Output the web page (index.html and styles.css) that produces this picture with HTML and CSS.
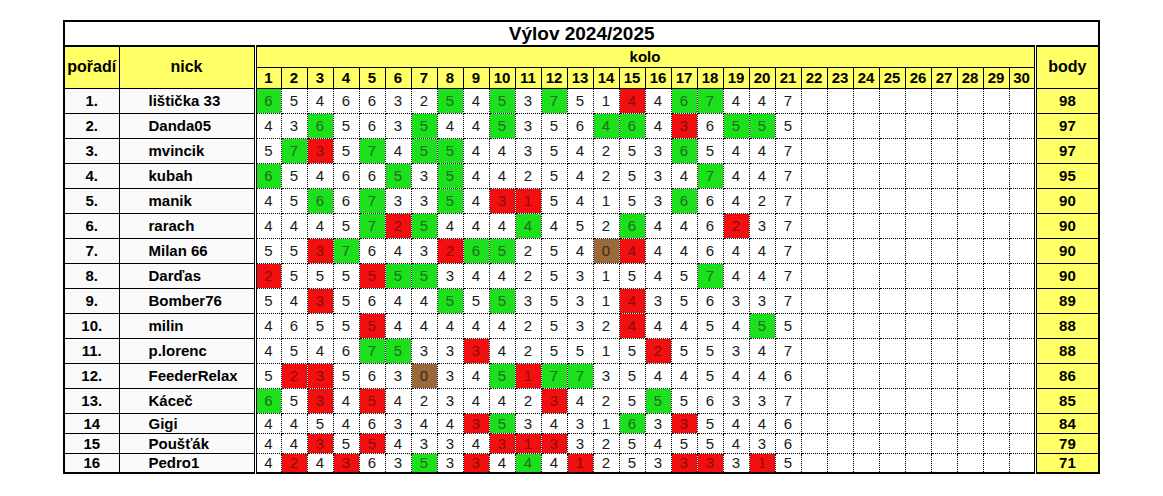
FILE: index.html
```html
<!DOCTYPE html>
<html lang="cs">
<head>
<meta charset="utf-8">
<title>Výlov 2024/2025</title>
<link rel="stylesheet" href="styles.css">
</head>
<body>
<table class="sheet">
<colgroup>
<col class="c-rank"><col class="c-nick">
<col class="c-k"><col class="c-k"><col class="c-k"><col class="c-k"><col class="c-k"><col class="c-k"><col class="c-k"><col class="c-k"><col class="c-k"><col class="c-k">
<col class="c-k"><col class="c-k"><col class="c-k"><col class="c-k"><col class="c-k"><col class="c-k"><col class="c-k"><col class="c-k"><col class="c-k"><col class="c-k">
<col class="c-k"><col class="c-k"><col class="c-k"><col class="c-k"><col class="c-k"><col class="c-k"><col class="c-k"><col class="c-k"><col class="c-k"><col class="c-k">
<col class="c-body">
</colgroup>
<thead>
<tr class="r-title"><th colspan="33" class="title">Výlov 2024/2025</th></tr>
<tr class="r-kolo"><th rowspan="2" class="hdr rank-h">pořadí</th><th rowspan="2" class="hdr nick-h">nick</th><th colspan="30" class="hdr kolo">kolo</th><th rowspan="2" class="hdr body-h">body</th></tr>
<tr class="r-num"><th class="hdr num">1</th><th class="hdr num">2</th><th class="hdr num">3</th><th class="hdr num">4</th><th class="hdr num">5</th><th class="hdr num">6</th><th class="hdr num">7</th><th class="hdr num">8</th><th class="hdr num">9</th><th class="hdr num">10</th><th class="hdr num">11</th><th class="hdr num">12</th><th class="hdr num">13</th><th class="hdr num">14</th><th class="hdr num">15</th><th class="hdr num">16</th><th class="hdr num">17</th><th class="hdr num">18</th><th class="hdr num">19</th><th class="hdr num">20</th><th class="hdr num">21</th><th class="hdr num">22</th><th class="hdr num">23</th><th class="hdr num">24</th><th class="hdr num">25</th><th class="hdr num">26</th><th class="hdr num">27</th><th class="hdr num">28</th><th class="hdr num">29</th><th class="hdr num">30</th></tr>
</thead>
<tbody>
<tr class="row"><td class="rank">1.</td><td class="nick">lištička 33</td><td class="v g">6</td><td class="v">5</td><td class="v">4</td><td class="v">6</td><td class="v">6</td><td class="v">3</td><td class="v">2</td><td class="v g">5</td><td class="v">4</td><td class="v g">5</td><td class="v">3</td><td class="v g">7</td><td class="v">5</td><td class="v">1</td><td class="v r">4</td><td class="v">4</td><td class="v g">6</td><td class="v g">7</td><td class="v">4</td><td class="v">4</td><td class="v">7</td><td class="v"></td><td class="v"></td><td class="v"></td><td class="v"></td><td class="v"></td><td class="v"></td><td class="v"></td><td class="v"></td><td class="v"></td><td class="pts">98</td></tr>
<tr class="row"><td class="rank">2.</td><td class="nick">Danda05</td><td class="v">4</td><td class="v">3</td><td class="v g">6</td><td class="v">5</td><td class="v">6</td><td class="v">3</td><td class="v g">5</td><td class="v">4</td><td class="v">4</td><td class="v g">5</td><td class="v">3</td><td class="v">5</td><td class="v">6</td><td class="v g">4</td><td class="v g">6</td><td class="v">4</td><td class="v r">3</td><td class="v">6</td><td class="v g">5</td><td class="v g">5</td><td class="v">5</td><td class="v"></td><td class="v"></td><td class="v"></td><td class="v"></td><td class="v"></td><td class="v"></td><td class="v"></td><td class="v"></td><td class="v"></td><td class="pts">97</td></tr>
<tr class="row"><td class="rank">3.</td><td class="nick">mvincik</td><td class="v">5</td><td class="v g">7</td><td class="v r">3</td><td class="v">5</td><td class="v g">7</td><td class="v">4</td><td class="v g">5</td><td class="v g">5</td><td class="v">4</td><td class="v">4</td><td class="v">3</td><td class="v">5</td><td class="v">4</td><td class="v">2</td><td class="v">5</td><td class="v">3</td><td class="v g">6</td><td class="v">5</td><td class="v">4</td><td class="v">4</td><td class="v">7</td><td class="v"></td><td class="v"></td><td class="v"></td><td class="v"></td><td class="v"></td><td class="v"></td><td class="v"></td><td class="v"></td><td class="v"></td><td class="pts">97</td></tr>
<tr class="row"><td class="rank">4.</td><td class="nick">kubah</td><td class="v g">6</td><td class="v">5</td><td class="v">4</td><td class="v">6</td><td class="v">6</td><td class="v g">5</td><td class="v">3</td><td class="v g">5</td><td class="v">4</td><td class="v">4</td><td class="v">2</td><td class="v">5</td><td class="v">4</td><td class="v">2</td><td class="v">5</td><td class="v">3</td><td class="v">4</td><td class="v g">7</td><td class="v">4</td><td class="v">4</td><td class="v">7</td><td class="v"></td><td class="v"></td><td class="v"></td><td class="v"></td><td class="v"></td><td class="v"></td><td class="v"></td><td class="v"></td><td class="v"></td><td class="pts">95</td></tr>
<tr class="row"><td class="rank">5.</td><td class="nick">manik</td><td class="v">4</td><td class="v">5</td><td class="v g">6</td><td class="v">6</td><td class="v g">7</td><td class="v">3</td><td class="v">3</td><td class="v g">5</td><td class="v">4</td><td class="v r">3</td><td class="v r">1</td><td class="v">5</td><td class="v">4</td><td class="v">1</td><td class="v">5</td><td class="v">3</td><td class="v g">6</td><td class="v">6</td><td class="v">4</td><td class="v">2</td><td class="v">7</td><td class="v"></td><td class="v"></td><td class="v"></td><td class="v"></td><td class="v"></td><td class="v"></td><td class="v"></td><td class="v"></td><td class="v"></td><td class="pts">90</td></tr>
<tr class="row"><td class="rank">6.</td><td class="nick">rarach</td><td class="v">4</td><td class="v">4</td><td class="v">4</td><td class="v">5</td><td class="v g">7</td><td class="v r">2</td><td class="v g">5</td><td class="v">4</td><td class="v">4</td><td class="v">4</td><td class="v g">4</td><td class="v">4</td><td class="v">5</td><td class="v">2</td><td class="v g">6</td><td class="v">4</td><td class="v">4</td><td class="v">6</td><td class="v r">2</td><td class="v">3</td><td class="v">7</td><td class="v"></td><td class="v"></td><td class="v"></td><td class="v"></td><td class="v"></td><td class="v"></td><td class="v"></td><td class="v"></td><td class="v"></td><td class="pts">90</td></tr>
<tr class="row"><td class="rank">7.</td><td class="nick">Milan 66</td><td class="v">5</td><td class="v">5</td><td class="v r">3</td><td class="v g">7</td><td class="v">6</td><td class="v">4</td><td class="v">3</td><td class="v r">2</td><td class="v g">6</td><td class="v g">5</td><td class="v">2</td><td class="v">5</td><td class="v">4</td><td class="v b">0</td><td class="v r">4</td><td class="v">4</td><td class="v">4</td><td class="v">6</td><td class="v">4</td><td class="v">4</td><td class="v">7</td><td class="v"></td><td class="v"></td><td class="v"></td><td class="v"></td><td class="v"></td><td class="v"></td><td class="v"></td><td class="v"></td><td class="v"></td><td class="pts">90</td></tr>
<tr class="row"><td class="rank">8.</td><td class="nick">Darďas</td><td class="v r">2</td><td class="v">5</td><td class="v">5</td><td class="v">5</td><td class="v r">5</td><td class="v g">5</td><td class="v g">5</td><td class="v">3</td><td class="v">4</td><td class="v">4</td><td class="v">2</td><td class="v">5</td><td class="v">3</td><td class="v">1</td><td class="v">5</td><td class="v">4</td><td class="v">5</td><td class="v g">7</td><td class="v">4</td><td class="v">4</td><td class="v">7</td><td class="v"></td><td class="v"></td><td class="v"></td><td class="v"></td><td class="v"></td><td class="v"></td><td class="v"></td><td class="v"></td><td class="v"></td><td class="pts">90</td></tr>
<tr class="row"><td class="rank">9.</td><td class="nick">Bomber76</td><td class="v">5</td><td class="v">4</td><td class="v r">3</td><td class="v">5</td><td class="v">6</td><td class="v">4</td><td class="v">4</td><td class="v g">5</td><td class="v">5</td><td class="v g">5</td><td class="v">3</td><td class="v">5</td><td class="v">3</td><td class="v">1</td><td class="v r">4</td><td class="v">3</td><td class="v">5</td><td class="v">6</td><td class="v">3</td><td class="v">3</td><td class="v">7</td><td class="v"></td><td class="v"></td><td class="v"></td><td class="v"></td><td class="v"></td><td class="v"></td><td class="v"></td><td class="v"></td><td class="v"></td><td class="pts">89</td></tr>
<tr class="row"><td class="rank">10.</td><td class="nick">milin</td><td class="v">4</td><td class="v">6</td><td class="v">5</td><td class="v">5</td><td class="v r">5</td><td class="v">4</td><td class="v">4</td><td class="v">4</td><td class="v">4</td><td class="v">4</td><td class="v">2</td><td class="v">5</td><td class="v">3</td><td class="v">2</td><td class="v r">4</td><td class="v">4</td><td class="v">4</td><td class="v">5</td><td class="v">4</td><td class="v g">5</td><td class="v">5</td><td class="v"></td><td class="v"></td><td class="v"></td><td class="v"></td><td class="v"></td><td class="v"></td><td class="v"></td><td class="v"></td><td class="v"></td><td class="pts">88</td></tr>
<tr class="row"><td class="rank">11.</td><td class="nick">p.lorenc</td><td class="v">4</td><td class="v">5</td><td class="v">4</td><td class="v">6</td><td class="v g">7</td><td class="v g">5</td><td class="v">3</td><td class="v">3</td><td class="v r">3</td><td class="v">4</td><td class="v">2</td><td class="v">5</td><td class="v">5</td><td class="v">1</td><td class="v">5</td><td class="v r">2</td><td class="v">5</td><td class="v">5</td><td class="v">3</td><td class="v">4</td><td class="v">7</td><td class="v"></td><td class="v"></td><td class="v"></td><td class="v"></td><td class="v"></td><td class="v"></td><td class="v"></td><td class="v"></td><td class="v"></td><td class="pts">88</td></tr>
<tr class="row"><td class="rank">12.</td><td class="nick">FeederRelax</td><td class="v">5</td><td class="v r">2</td><td class="v r">3</td><td class="v">5</td><td class="v">6</td><td class="v">3</td><td class="v b">0</td><td class="v">3</td><td class="v">4</td><td class="v g">5</td><td class="v r">1</td><td class="v g">7</td><td class="v g">7</td><td class="v">3</td><td class="v">5</td><td class="v">4</td><td class="v">4</td><td class="v">5</td><td class="v">4</td><td class="v">4</td><td class="v">6</td><td class="v"></td><td class="v"></td><td class="v"></td><td class="v"></td><td class="v"></td><td class="v"></td><td class="v"></td><td class="v"></td><td class="v"></td><td class="pts">86</td></tr>
<tr class="row"><td class="rank">13.</td><td class="nick">Káceč</td><td class="v g">6</td><td class="v">5</td><td class="v r">3</td><td class="v">4</td><td class="v r">5</td><td class="v">4</td><td class="v">2</td><td class="v">3</td><td class="v">4</td><td class="v">4</td><td class="v">2</td><td class="v r">3</td><td class="v">4</td><td class="v">2</td><td class="v">5</td><td class="v g">5</td><td class="v">5</td><td class="v">6</td><td class="v">3</td><td class="v">3</td><td class="v">7</td><td class="v"></td><td class="v"></td><td class="v"></td><td class="v"></td><td class="v"></td><td class="v"></td><td class="v"></td><td class="v"></td><td class="v"></td><td class="pts">85</td></tr>
<tr class="row short"><td class="rank">14</td><td class="nick">Gigi</td><td class="v">4</td><td class="v">4</td><td class="v">5</td><td class="v">4</td><td class="v">6</td><td class="v">3</td><td class="v">4</td><td class="v">4</td><td class="v r">3</td><td class="v g">5</td><td class="v">3</td><td class="v">4</td><td class="v">3</td><td class="v">1</td><td class="v g">6</td><td class="v">3</td><td class="v r">3</td><td class="v">5</td><td class="v">4</td><td class="v">4</td><td class="v">6</td><td class="v"></td><td class="v"></td><td class="v"></td><td class="v"></td><td class="v"></td><td class="v"></td><td class="v"></td><td class="v"></td><td class="v"></td><td class="pts">84</td></tr>
<tr class="row short"><td class="rank">15</td><td class="nick">Poušťák</td><td class="v">4</td><td class="v">4</td><td class="v r">3</td><td class="v">5</td><td class="v r">5</td><td class="v">4</td><td class="v">3</td><td class="v">3</td><td class="v">4</td><td class="v r">3</td><td class="v r">1</td><td class="v r">3</td><td class="v">3</td><td class="v">2</td><td class="v">5</td><td class="v">4</td><td class="v">5</td><td class="v">5</td><td class="v">4</td><td class="v">3</td><td class="v">6</td><td class="v"></td><td class="v"></td><td class="v"></td><td class="v"></td><td class="v"></td><td class="v"></td><td class="v"></td><td class="v"></td><td class="v"></td><td class="pts">79</td></tr>
<tr class="row short"><td class="rank">16</td><td class="nick">Pedro1</td><td class="v">4</td><td class="v r">2</td><td class="v">4</td><td class="v r">3</td><td class="v">6</td><td class="v">3</td><td class="v g">5</td><td class="v">3</td><td class="v r">3</td><td class="v">4</td><td class="v g">4</td><td class="v">4</td><td class="v r">1</td><td class="v">2</td><td class="v">5</td><td class="v">3</td><td class="v r">3</td><td class="v r">3</td><td class="v">3</td><td class="v r">1</td><td class="v">5</td><td class="v"></td><td class="v"></td><td class="v"></td><td class="v"></td><td class="v"></td><td class="v"></td><td class="v"></td><td class="v"></td><td class="v"></td><td class="pts">71</td></tr>
</tbody>
</table>
</body>
</html>
```
FILE: styles.css
```css
html, body {
  margin: 0;
  padding: 0;
  background: #ffffff;
}
body {
  padding: 20px 0 0 63px;
  font-family: "Liberation Sans", Arial, sans-serif;
  color: #000;
}
.sheet {
  border-collapse: collapse;
  table-layout: fixed;
  width: 1036px;
  border: 2px solid #000;
}
.c-rank { width: 55px; }
.c-nick { width: 136px; }
.c-k { width: 26px; }
.c-body { width: 64px; }

.sheet th, .sheet td {
  padding: 0;
  text-align: center;
  vertical-align: middle;
  overflow: hidden;
  white-space: nowrap;
}
.r-title { height: 25px; }
.title {
  font-size: 19px;
  font-weight: bold;
  border-bottom: 2px solid #000;
  background: #fff;
}
.r-kolo { height: 21px; }
.r-num { height: 21px; }
.hdr {
  background: #ffff66;
  font-weight: bold;
  border: 1px solid #000;
}
.rank-h, .nick-h, .body-h {
  font-size: 16px;
}
.nick-h { border-right: 3px double #000; }
.body-h { border-left: 3px double #000; }
.kolo {
  font-size: 15px;
  line-height: 18px;
}
.num {
  font-size: 15px;
}
.row { height: 25px; }
.row.short { height: 20px; }
.rank {
  font-size: 15px;
  font-weight: bold;
  border: 1px solid #000;
  background: #fafafa;
}
.nick {
  font-size: 15px;
  font-weight: bold;
  text-align: left !important;
  padding-left: 29px !important;
  border: 1px solid #000;
  border-right: 3px double #000;
  background: #fafafa;
}
.v {
  font-size: 15px;
  border: 1px dotted #000;
  color: #1a1a1a;
}
.v.g { background: #1de01d; color: #1f6b1f; }
.v.r { background: #f20f0f; color: #8c0a0a; }
.v.b { background: #9a6a3a; color: #3a2a18; }
.pts {
  font-size: 15px;
  font-weight: bold;
  background: #ffff66;
  border: 1px solid #000;
  border-left: 3px double #000;
}
```
